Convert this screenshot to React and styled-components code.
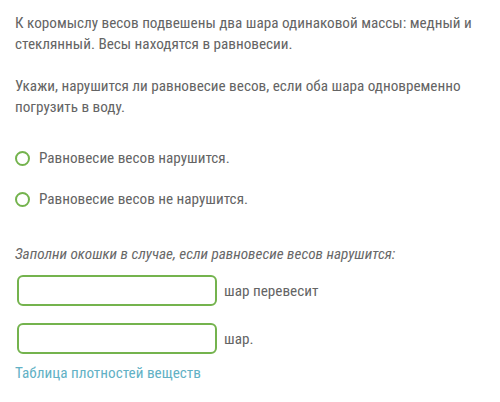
import React from "react";
import styled, { createGlobalStyle } from "styled-components";

const Global = createGlobalStyle`
  html, body { margin: 0; padding: 0; background: #fff; }
  body { font-family: Roboto, "Noto Sans", sans-serif; color: #646464; font-stretch: 87.5%; }
`;

const Page = styled.div`
  width: 500px;
  height: 402px;
  box-sizing: border-box;
  padding: 13px 0 0 15px;
  overflow: hidden;
`;

const Para = styled.p`
  margin: 0 0 ${(p) => p.$mb || 0}px;
  font-size: 15.2px;
  line-height: 21px;
  width: 475px;
`;

const Options = styled.div`
  display: flex;
  flex-direction: column;
  gap: 19px;
  margin: 29px 0 0 0;
`;

const Option = styled.label`
  display: flex;
  align-items: center;
  gap: 9px;
  font-size: 15.2px;
  line-height: 22px;
`;

const Circle = styled.span`
  width: 15px;
  height: 15px;
  box-sizing: border-box;
  border: 2px solid #74b34e;
  border-radius: 50%;
  flex: none;
`;

const Hint = styled.p`
  margin: 33px 0 0;
  font-size: 15.2px;
  line-height: 22px;
  font-style: italic;
  color: #686868;
`;

const Fields = styled.div`
  display: flex;
  flex-direction: column;
  gap: 17px;
  margin: 10px 0 0 2px;
`;

const FieldRow = styled.div`
  display: flex;
  align-items: center;
  gap: 7px;
`;

const Box = styled.div`
  width: 200px;
  height: 31px;
  box-sizing: border-box;
  border: 2px solid #74b34e;
  border-radius: 6px;
  background: #fff;
`;

const FieldLabel = styled.span`
  font-size: 15.2px;
`;

const Link = styled.a`
  display: block;
  margin-top: 8px;
  font-size: 15.2px;
  line-height: 22px;
  color: #62b1c5;
  text-decoration: none;
`;

export default function App() {
  return (
    <Page>
      <Global />
      <Para $mb={21}>
        К коромыслу весов подвешены два шара одинаковой массы: медный и стеклянный. Весы находятся в равновесии.
      </Para>
      <Para>
        Укажи, нарушится ли равновесие весов, если оба шара одновременно погрузить в воду.
      </Para>
      <Options>
        <Option><Circle />Равновесие весов нарушится.</Option>
        <Option><Circle />Равновесие весов не нарушится.</Option>
      </Options>
      <Hint>Заполни окошки в случае, если равновесие весов нарушится:</Hint>
      <Fields>
        <FieldRow><Box /><FieldLabel>шар перевесит</FieldLabel></FieldRow>
        <FieldRow><Box /><FieldLabel>шар.</FieldLabel></FieldRow>
      </Fields>
      <Link href="#">Таблица плотностей веществ</Link>
    </Page>
  );
}
